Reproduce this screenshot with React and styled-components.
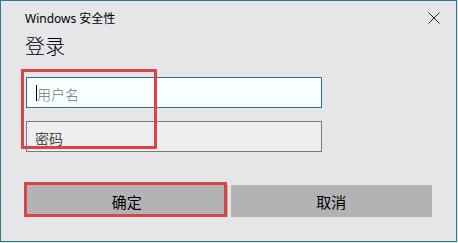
import React from 'react';
import styled, { createGlobalStyle } from 'styled-components';

const GlobalStyle = createGlobalStyle`
  html, body {
    margin: 0;
    padding: 0;
    background: #e6e5e8;
  }
`

const Window = styled.div`
  position: relative;
  box-sizing: border-box;
  width: 457px;
  height: 242px;
  border: 1px solid #2c7a90;
  background: #e6e5e8;
  display: flex;
  flex-direction: column;
  font-family: "Segoe UI", "Noto Sans", "Noto Sans CJK SC", sans-serif;
  color: #000;
`

const TitleBar = styled.div`
  height: 33px;
  display: flex;
  align-items: center;
  justify-content: space-between;
  padding: 0 16px 0 24px;
  font-size: 12px;
`

const Close = styled.svg`
  width: 12px;
  height: 12px;
  display: block;
`

const Body = styled.div`
  padding: 0 24px 0 25px;
  display: flex;
  flex-direction: column;
`

const Heading = styled.div`
  font-size: 20px;
  font-weight: 300;
  line-height: 24px;
  height: 24px;
  margin-left: -1px;
  padding-top: 1px;
`

const Field = styled.div`
  box-sizing: border-box;
  width: 296px;
  height: 31px;
  margin-top: ${(p) => p.top}px;
  border: 1px solid ${(p) => (p.focused ? '#2b6f99' : '#7b7b7d')};
  background: ${(p) => (p.focused ? '#f8fdff' : '#eeedef')};
  display: flex;
  align-items: center;
  padding-left: ${(p) => (p.focused ? 9 : 8)}px;
  padding-top: 3px;
  font-size: 14px;
  font-weight: ${(p) => (p.focused ? 300 : 400)};
  color: ${(p) => (p.focused ? '#767676' : '#4a4a4a')};
`

const Caret = styled.span`
  display: inline-block;
  width: 1px;
  height: 16px;
  background: #000;
  margin-top: -2px;
`

const Buttons = styled.div`
  display: grid;
  grid-template-columns: 1fr 1fr;
  gap: 3px;
  margin-top: 33px;
`

const Button = styled.div`
  height: 32px;
  background: #b3b2b4;
  display: flex;
  align-items: center;
  justify-content: center;
  font-size: 15px;
  padding-top: 1px;
  box-sizing: border-box;
`

const Mark = styled.div`
  position: absolute;
  box-sizing: border-box;
  border: 3px solid #d84545;
  left: ${(p) => p.x}px;
  top: ${(p) => p.y}px;
  width: ${(p) => p.w}px;
  height: ${(p) => p.h}px;
  pointer-events: none;
`

export default function App() {
  return (
    <>
      <GlobalStyle />
      <Window>
        <TitleBar>
          <span>Windows 安全性</span>
          <Close viewBox="0 0 12 12">
            <path d="M0.5 0.5 L11.5 11.5 M11.5 0.5 L0.5 11.5" stroke="#222" strokeWidth="1" fill="none" />
          </Close>
        </TitleBar>
        <Body>
          <Heading>登录</Heading>
          <Field focused top={18}>
            <Caret />
            <span>用户名</span>
          </Field>
          <Field top={13}>密码</Field>
          <Buttons>
            <Button>确定</Button>
            <Button>取消</Button>
          </Buttons>
        </Body>
        <Mark x={20} y={68} w={136} h={80} />
        <Mark x={23} y={181} w={203} h={35} />
      </Window>
    </>
  );
}
